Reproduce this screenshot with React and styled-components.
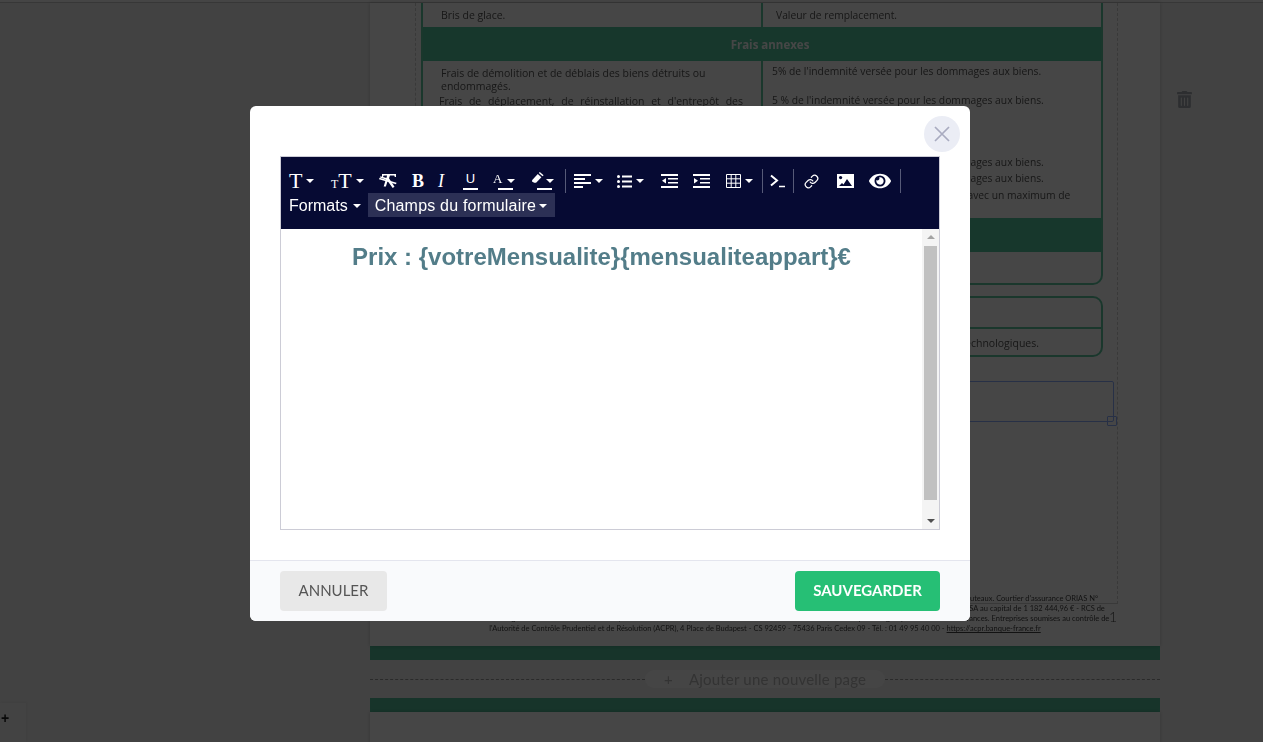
import React from "react";
import styled, { createGlobalStyle } from "styled-components";
import { FaTrashAlt, FaEye } from "react-icons/fa";
import { FiLink } from "react-icons/fi";

const Global = createGlobalStyle`
  html, body { margin: 0; padding: 0; height: 100%; overflow: hidden; }
  body { background: #f0f0f0; font-family: "Lato", "Liberation Sans", sans-serif; }
`;

const TOOLS = [
  { id: "font", w: 42, caret: true, glyph: "T" },
  { id: "size", w: 48, caret: true, glyph: "size" },
  { id: "clear", w: 32, glyph: "clear" },
  { id: "bold", w: 26, glyph: "B" },
  { id: "italic", w: 26, glyph: "I" },
  { id: "underline", w: 30, glyph: "U" },
  { id: "color", w: 39, caret: true, glyph: "A" },
  { id: "pen", w: 33, caret: true, glyph: "pen" },
  { id: "d1", w: 9, divider: true },
  { id: "align", w: 43, caret: true, glyph: "align" },
  { id: "list", w: 44, caret: true, glyph: "list" },
  { id: "outdent", w: 32, glyph: "outdent" },
  { id: "indent", w: 33, glyph: "indent" },
  { id: "table", w: 36, caret: true, glyph: "table" },
  { id: "d2", w: 8, divider: true },
  { id: "code", w: 23, glyph: "code" },
  { id: "d3", w: 11, divider: true },
  { id: "link", w: 33, glyph: "link" },
  { id: "image", w: 32, glyph: "image" },
  { id: "eye", w: 31, glyph: "eye" },
  { id: "d4", w: 9, divider: true },
];

function Glyph({ name }) {
  switch (name) {
    case "T":
      return <BigT>T</BigT>;
    case "size":
      return (
        <>
          <SmallT>T</SmallT>
          <BigT>T</BigT>
        </>
      );
    case "clear":
      return (
        <svg width="18" height="16" viewBox="0 0 18 16" fill="#fff">
          <path d="M3 1h14v3h-1.2l-.5-1.4H11l-1 2.6 5.5 8.6-1.8 1.2L8.6 8l-1.7 5.6h-2.2L6.8 6.4 1 4.6l.5-1.4 5.9 1.8.7-2.4H4.6L4 4H3z" />
          <path d="M0 6.2l.5-1.4 17 5-.5 1.4z" />
        </svg>
      );
    case "B":
      return <SerifLetter $bold>B</SerifLetter>;
    case "I":
      return <SerifLetter $italic>I</SerifLetter>;
    case "U":
      return <UnderLetter>U</UnderLetter>;
    case "A":
      return <Marked><ColorLetter>A</ColorLetter></Marked>;
    case "pen":
      return (
        <Marked>
          <svg width="12" height="12" viewBox="0 0 12 12" fill="#fff">
            <path d="M0 8.2L5.8 2l3.6 3.2-5.3 5.6H2.2L0 9.4z" />
            <path d="M6.8 1l1-1 3.8 3.2-1.1 1.1z" />
          </svg>
        </Marked>
      );
    case "align":
      return (
        <svg width="17" height="14" viewBox="0 0 17 14" fill="#fff">
          <path d="M0 0h17v2H0zM0 4h11v2H0zM0 8h17v2H0zM0 12h9v2H0z" />
        </svg>
      );
    case "list":
      return (
        <svg width="15" height="13" viewBox="0 0 15 13" fill="#fff">
          <circle cx="1.5" cy="1.5" r="1.5" />
          <circle cx="1.5" cy="6.5" r="1.5" />
          <circle cx="1.5" cy="11.5" r="1.5" />
          <path d="M5 .5h10v2H5zM5 5.5h10v2H5zM5 10.5h10v2H5z" />
        </svg>
      );
    case "outdent":
      return (
        <svg width="17" height="14" viewBox="0 0 17 14" fill="#fff">
          <path d="M0 0h17v2H0zM7 4h10v1.5H7zM7 8h10v1.5H7zM0 12h17v2H0z" />
          <path d="M5 4v5.5L1 6.8z" />
        </svg>
      );
    case "indent":
      return (
        <svg width="17" height="14" viewBox="0 0 17 14" fill="#fff">
          <path d="M0 0h17v2H0zM7 4h10v1.5H7zM7 8h10v1.5H7zM0 12h17v2H0z" />
          <path d="M1 4v5.5l4-2.7z" />
        </svg>
      );
    case "table":
      return (
        <svg width="15" height="14" viewBox="0 0 15 14" fill="none" stroke="#fff">
          <path d="M.5.5h14v13H.5zM.5 4.8h14M.5 9.2h14M5.2.5v13M9.8.5v13" />
        </svg>
      );
    case "code":
      return (
        <svg width="15" height="14" viewBox="0 0 15 14" fill="none" stroke="#fff">
          <path d="M1 1.5L7 6.5 1 11.5" strokeWidth="2" />
          <path d="M9 12.5h6" strokeWidth="1.5" />
        </svg>
      );
    case "link":
      return <FiLink size={15} color="#fff" />;
    case "image":
      return (
        <svg width="17" height="14" viewBox="0 0 17 14">
          <path fill="#fff" d="M0 0h17v14H0z" />
          <circle cx="3.6" cy="3.6" r="1.6" fill="#060a33" />
          <path fill="#060a33" d="M2 12l3-3 1.5 1.5L10 5l5 7z" />
        </svg>
      );
    case "eye":
      return <FaEye size={22} color="#fff" />;
    default:
      return null;
  }
}

export default function App() {
  return (
    <>
      <Global />
      <TopStrip />
      <Canvas>
        <Sheet>
          <Guides>
            <CoverTable>
              <Row $h={24}>
                <Cell>Bris de glace.</Cell>
                <Cell $right $inset={13} $top={6}>Valeur de remplacement.</Cell>
              </Row>
              <Band $h={34}>Frais annexes</Band>
              <Row $h={157}>
                <Cell>
                  <Para>
                    Frais de démolition et de déblais des biens détruits ou
                    endommagés.
                  </Para>
                  <JustifiedPara>
                    Frais de déplacement, de réinstallation et d'entrepôt des
                    biens garantis.
                  </JustifiedPara>
                </Cell>
                <Cell $right>
                  <Para>5% de l'indemnité versée pour les dommages aux biens.</Para>
                  <Para $gap={16}>5 % de l'indemnité versée pour les dommages aux biens.</Para>
                  <Para $gap={49}>5 % de l'indemnité versée pour les dommages aux biens.</Para>
                  <Para $gap={3}>5 % de l'indemnité versée pour les dommages aux biens.</Para>
                  <Para $gap={4}>5 % de l'indemnité versée pour les biens avec un maximum de</Para>
                </Cell>
              </Row>
              <Band $h={34} />
              <Row $h={31} />
            </CoverTable>
            <SmallTable>
              <SmallRow />
              <SmallRow $last>Adaptation du matériel aux évolutions technologiques.</SmallRow>
            </SmallTable>
            <AnchorBox>
              <Handle />
            </AnchorBox>
          </Guides>
          <Legal>
            <div>
              Ce document est remis à titre d'information et ne constitue pas une offre contractuelle. Société de courtage en assurance immatriculée, Tour de la Défense, 92800 Puteaux. Courtier d'assurance ORIAS N°
            </div>
            <div>
              07200059 consultable sur www.orias.fr. Assurance distribuée par une société de courtage, filiale à 100 % d'une société d'assurance de droit français régie par le code, SA au capital de 1 182 444,96 € - RCS de
            </div>
            <div>
              Numéro N° 07200059 - Siège social : Villa SA - Paris &amp; Co. 2, Parvis de la Défense, Grande Arche de la Défense 92800 Puteaux. Entreprises régies par le code des assurances. Entreprises soumises au contrôle de
            </div>
            <div>
              l'Autorité de Contrôle Prudentiel et de Résolution (ACPR), 4 Place de Budapest - CS 92459 - 75436 Paris Cedex 09 - Tél. : 01 49 95 40 00 - <u>https://acpr.banque-france.fr</u>
            </div>
            <PageNumber>1</PageNumber>
          </Legal>
        </Sheet>
        <GreenBar />
        <AddRow>
          <Dash />
          <AddPill>
            <span>+</span>
            <span>Ajouter une nouvelle page</span>
          </AddPill>
          <Dash />
        </AddRow>
        <GreenBar />
        <NextSheet />
      </Canvas>
      <TrashSlot>
        <FaTrashAlt size={17} color="#a4a9b0" />
      </TrashSlot>
      <Zoomer>+</Zoomer>

      <Overlay>
        <Modal>
          <CloseButton aria-label="Fermer">
            <svg width="16" height="16" viewBox="0 0 16 16" stroke="#a9abc0" strokeWidth="1.7">
              <path d="M1 1l14 14M15 1L1 15" />
            </svg>
          </CloseButton>
          <ModalBody>
            <Editor>
              <Toolbar>
                <ToolRow>
                  {TOOLS.map((t) =>
                    t.divider ? (
                      <Divider key={t.id} $w={t.w} />
                    ) : (
                      <Tool key={t.id} $w={t.w}>
                        <Glyph name={t.glyph} />
                        {t.caret && <Caret />}
                      </Tool>
                    )
                  )}
                </ToolRow>
                <MenuRow>
                  <MenuButton>
                    Formats<Caret />
                  </MenuButton>
                  <MenuButton $active>
                    Champs du formulaire<Caret />
                  </MenuButton>
                </MenuRow>
              </Toolbar>
              <EditArea>
                <Content>Prix : {"{votreMensualite}{mensualiteappart}"}€</Content>
                <Scrollbar>
                  <ArrowUp />
                  <Thumb />
                  <ArrowDown />
                </Scrollbar>
              </EditArea>
            </Editor>
          </ModalBody>
          <ModalFooter>
            <CancelButton>ANNULER</CancelButton>
            <SaveButton>SAUVEGARDER</SaveButton>
          </ModalFooter>
        </Modal>
      </Overlay>
    </>
  );
}

const TopStrip = styled.div`
  height: 3px;
  background: #fafafa;
  border-bottom: 1px solid #c8c8c8;
  box-sizing: border-box;
`;
const Canvas = styled.main`
  display: flex;
  flex-direction: column;
  width: 790px;
  margin-left: 370px;
  filter: blur(0.4px);
`;
const Sheet = styled.section`
  position: relative;
  height: 643px;
  box-sizing: border-box;
  background: #fff;
  box-shadow: 0 0 4px rgba(0, 0, 0, 0.2);
`;
const Guides = styled.div`
  width: 703px;
  height: 601px;
  margin-left: 45px;
  padding: 0 5px;
  box-sizing: border-box;
  border: solid #cfcfcf;
  border-width: 0 1px 1px;
  border-left-style: dashed;
  border-right-style: dashed;
`;
const CoverTable = styled.div`
  width: 682px;
  box-sizing: border-box;
  border: solid #5fc9a2;
  border-width: 0 2px 2px;
  border-radius: 0 0 10px 10px;
  color: #555;
  font-family: "Open Sans", sans-serif;
  font-size: 10.5px;
`;
const Row = styled.div`
  display: grid;
  grid-template-columns: 338px 1fr;
  height: ${(p) => p.$h}px;
`;
const Cell = styled.div`
  padding: ${(p) =>
    p.$right ? `${p.$top || 4}px 18px 0 ${p.$inset || 9}px` : "6px 18px 0 18px"};
  border-left: ${(p) => (p.$right ? "2px solid #5fc9a2" : "0")};
  font-size: ${(p) => (p.$right ? 10.3 : 10.5)}px;
  box-sizing: border-box;
  line-height: 13px;
`;
const Para = styled.p`
  margin: ${(p) => p.$gap || 0}px 0 0;
`;
const JustifiedPara = styled.p`
  margin: 2px 0 0 -2px;
  text-align: justify;
`;
const Band = styled.div`
  height: ${(p) => p.$h}px;
  background: #53c9a0;
  color: #fff;
  font-weight: 700;
  font-size: 11.5px;
  font-family: "Open Sans", sans-serif;
  display: flex;
  align-items: center;
  justify-content: center;
  padding-left: 16px;
`;
const SmallTable = styled.div`
  width: 682px;
  box-sizing: border-box;
  margin-top: 11px;
  height: 61px;
  border: 2px solid #5fc9a2;
  border-radius: 10px;
  color: #555;
  font-family: "Open Sans", sans-serif;
  font-size: 10.5px;
`;
const SmallRow = styled.div`
  height: 29px;
  display: flex;
  align-items: center;
  justify-content: flex-end;
  padding-right: 62px;
  border-top: ${(p) => (p.$last ? "2px solid #5fc9a2" : "0")};
  box-sizing: border-box;
`;
const AnchorBox = styled.div`
  position: relative;
  width: 693px;
  height: 41px;
  margin-top: 24px;
  box-sizing: border-box;
  border: 1px solid #8fb0ff;
  border-radius: 2px;
`;
const Handle = styled.span`
  position: absolute;
  right: -4px;
  bottom: -5px;
  width: 8px;
  height: 8px;
  border: 1px solid #8fb0ff;
  border-radius: 1px;
`;
const Legal = styled.footer`
  position: relative;
  width: 690px;
  margin: -10px 0 0 50px;
  color: #444;
  font-size: 7.5px;
  line-height: 10px;
  text-align: center;
  white-space: nowrap;
`;
const PageNumber = styled.span`
  position: absolute;
  right: -7px;
  top: 18px;
  font-size: 14px;
  font-weight: 300;
`;
const GreenBar = styled.div`
  height: 14px;
  background: #54bf9b;
`;
const AddRow = styled.div`
  height: 38px;
  display: flex;
  align-items: center;
`;
const Dash = styled.div`
  flex: 1;
  border-top: 1px dashed #999;
`;
const AddPill = styled.div`
  width: 240px;
  height: 18px;
  box-sizing: border-box;
  border-radius: 9px;
  background: #fafafa;
  color: #b8b8b8;
  font-size: 15px;
  display: flex;
  align-items: center;
  gap: 16px;
  padding-left: 19px;
  letter-spacing: 0.2px;
`;
const NextSheet = styled.div`
  height: 40px;
  background: #fff;
  box-shadow: 0 0 4px rgba(0, 0, 0, 0.2);
`;
const TrashSlot = styled.div`
  position: fixed;
  left: 1176px;
  top: 91px;
`;
const Zoomer = styled.div`
  position: fixed;
  left: 0;
  bottom: 0;
  width: 26px;
  height: 39px;
  box-sizing: border-box;
  background: #f3f3f3;
  box-shadow: 1px -1px 3px rgba(0, 0, 0, 0.05);
  font: 700 14px/30px "Liberation Sans", sans-serif;
  color: #222;
  text-indent: 1px;
`;
const Overlay = styled.div`
  position: fixed;
  inset: 0;
  background: rgba(0, 0, 0, 0.725);
  display: flex;
  align-items: flex-start;
  padding: 106px 0 0 250px;
`;
const Modal = styled.div`
  position: relative;
  width: 720px;
  height: 515px;
  background: #fff;
  border-radius: 6px;
  overflow: hidden;
  display: flex;
  flex-direction: column;
`;
const CloseButton = styled.button`
  position: absolute;
  top: 10px;
  right: 10px;
  width: 36px;
  height: 36px;
  padding: 0;
  border: 0;
  border-radius: 50%;
  background: #ebedf5;
  display: flex;
  align-items: center;
  justify-content: center;
`;
const ModalBody = styled.div`
  flex: 1;
  padding: 50px 30px 30px;
`;
const Editor = styled.div`
  height: 374px;
  box-sizing: border-box;
  border: 1px solid #ccccd6;
  display: flex;
  flex-direction: column;
`;
const Toolbar = styled.div`
  height: 72px;
  flex: none;
  background: #060a33;
  padding: 12px 0 0 8px;
  box-sizing: border-box;
`;
const ToolRow = styled.div`
  display: flex;
  align-items: center;
  height: 24px;
`;
const Tool = styled.div`
  width: ${(p) => p.$w}px;
  height: 24px;
  flex: none;
  display: flex;
  align-items: center;
  color: #fff;
`;
const Divider = styled.div`
  width: ${(p) => p.$w}px;
  height: 24px;
  flex: none;
  box-sizing: border-box;
  border-left: 1px solid #565a78;
`;
const Caret = styled.i`
  display: inline-block;
  width: 0;
  height: 0;
  margin-left: 4px;
  border: 4px solid transparent;
  border-top-color: #fff;
  border-bottom: 0;
`;
const BigT = styled.span`
  font: 400 22px/24px "Liberation Serif", serif;
`;
const SmallT = styled.span`
  font: 400 12px/24px "Liberation Serif", serif;
  padding-top: 5px;
`;
const SerifLetter = styled.span`
  font: ${(p) => (p.$italic ? "italic 400" : p.$bold ? "700" : "400")} 18px/24px "Liberation Serif", serif;
  padding-left: 1px;
`;
const UnderLetter = styled.span`
  width: 15px;
  height: 16px;
  border-bottom: 2px solid #fff;
  text-align: center;
  font: 400 13px/14px "Liberation Sans", sans-serif;
`;
/* the colour tools: a small mark with a bar that runs on under the caret */
const Marked = styled.span`
  position: relative;
  width: 14px;
  height: 18px;
  display: flex;
  align-items: flex-start;
  margin-right: -4px;
  &::after {
    content: "";
    position: absolute;
    left: 5px;
    bottom: 0;
    width: 15px;
    height: 2px;
    background: #fff;
  }
`;
const ColorLetter = styled.span`
  font: 400 13px/14px "Liberation Serif", serif;
`;
const MenuRow = styled.div`
  display: flex;
  height: 24px;
`;
const MenuButton = styled.div`
  display: flex;
  align-items: center;
  height: 24px;
  box-sizing: border-box;
  padding: ${(p) => (p.$active ? "1px 8px 0 7px" : "1px 0 0")};
  margin-right: ${(p) => (p.$active ? 0 : "7px")};
  background: ${(p) => (p.$active ? "#2c3055" : "transparent")};
  color: #fff;
  font: 400 16px/22px "Liberation Sans", sans-serif;
  letter-spacing: ${(p) => (p.$active ? "0.2px" : 0)};
  & > i {
    margin-left: ${(p) => (p.$active ? "3px" : "5px")};
  }
`;
const EditArea = styled.div`
  flex: 1;
  display: flex;
  min-height: 0;
`;
const Content = styled.div`
  flex: 1;
  text-align: center;
  padding-top: 14px;
  color: #537d89;
  font: 700 24px/28px "Liberation Sans", sans-serif;
`;
const Scrollbar = styled.div`
  width: 17px;
  flex: none;
  background: #f4f4f4;
  display: flex;
  flex-direction: column;
  align-items: center;
  justify-content: space-between;
  padding: 6px 0;
  box-sizing: border-box;
`;
const ArrowUp = styled.i`
  width: 0;
  height: 0;
  border: 4px solid transparent;
  border-bottom-color: #a3a3a3;
  border-top: 0;
`;
const ArrowDown = styled.i`
  width: 0;
  height: 0;
  border: 4px solid transparent;
  border-top-color: #505050;
  border-bottom: 0;
`;
const Thumb = styled.div`
  width: 13px;
  height: 254px;
  margin: -2px 0 10px;
  background: #c1c1c1;
`;
const ModalFooter = styled.div`
  height: 61px;
  flex: none;
  box-sizing: border-box;
  border-top: 1px solid #e4e5ee;
  background: #f9fafc;
  padding: 10px 30px;
  display: flex;
  justify-content: space-between;
`;
const CancelButton = styled.button`
  width: 107px;
  height: 40px;
  border: 0;
  border-radius: 4px;
  background: #e8e8e8;
  color: #555;
  font: 400 15px "Lato", sans-serif;
  padding: 0 0 2px;
`;
const SaveButton = styled.button`
  width: 145px;
  height: 40px;
  border: 0;
  border-radius: 4px;
  background: #26bf75;
  color: #fff;
  font: 700 15px "Lato", sans-serif;
  padding: 0 0 2px;
`;
